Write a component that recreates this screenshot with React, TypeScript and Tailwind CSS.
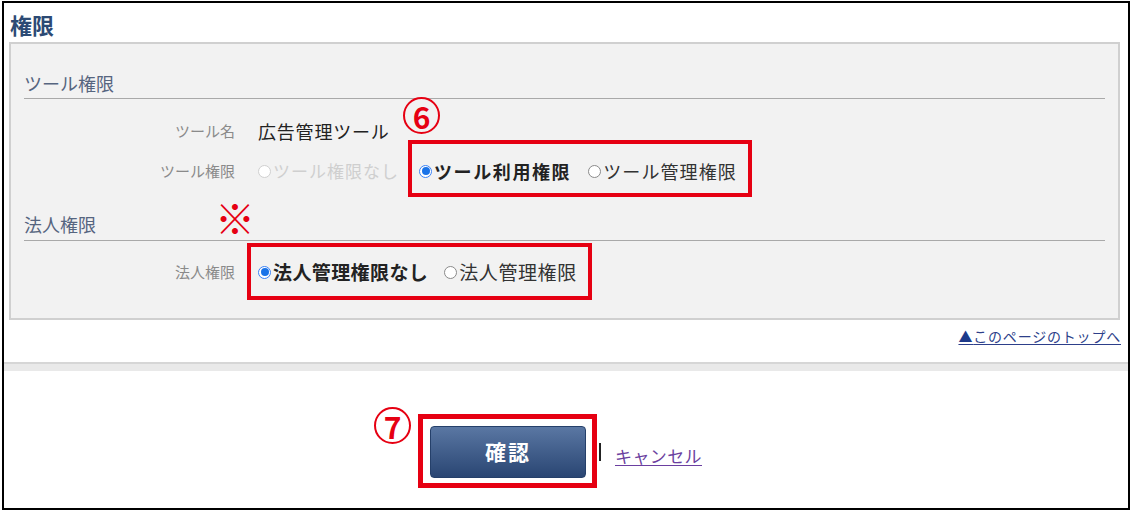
import React from "react";

const font = { fontFamily: '"Noto Sans CJK JP", "Noto Sans", sans-serif' };

function Radio({ checked, disabled }: { checked?: boolean; disabled?: boolean }) {
  if (checked) {
    return (
      <span className="mr-[2px] inline-flex h-[13px] w-[13px] shrink-0 items-center justify-center rounded-full border border-[#3b82f6] bg-white">
        <span className="h-[8px] w-[8px] rounded-full bg-[#1a73e8]" />
      </span>
    );
  }
  return (
    <span
      className={
        "mr-[2px] inline-block h-[13px] w-[13px] shrink-0 rounded-full border bg-white " +
        (disabled ? "border-[#d0d0d0]" : "border-[#8a8a8a]")
      }
    />
  );
}

function CircledNumber({ n, className }: { n: string; className: string }) {
  return (
    <span
      className={
        "absolute flex h-[37px] w-[37px] items-center justify-center rounded-full border-2 border-[#e60012] text-[30px] font-bold leading-none text-[#e60012] " +
        className
      }
    >
      {n}
    </span>
  );
}

function Row({ label, children }: { label: string; children: React.ReactNode }) {
  return (
    <div className="flex items-center leading-[24px]">
      <div className="w-[224px] shrink-0 text-right text-[15px] text-[#8a8a8a]">{label}</div>
      <div className="ml-[23px] flex items-center">{children}</div>
    </div>
  );
}

export default function App() {
  return (
    <div className="h-[513px] w-[1133px] bg-white" style={font}>
      <div className="ml-[2px] mt-[1px] flex h-[509px] w-[1128px] flex-col border-2 border-black">
        {/* title */}
        <div className="flex h-[39px] items-center pl-[6px] pt-[3px] text-[22px] font-bold text-[#2c4a74]">
          権限
        </div>

        {/* permissions panel */}
        <div className="ml-[5px] w-[1111px] border-2 border-[#d0d0d0] bg-[#f2f2f2] pb-[34px]">
          <div className="mx-[13px] border-b border-[#a9a9a9] pb-[3px] pt-[27px] text-[18px] leading-[24px] text-[#56657f]">
            ツール権限
          </div>

          <div className="mt-[20px] flex flex-col gap-[16px]">
            <Row label="ツール名">
              <span className="text-[18px] tracking-[0.8px] text-[#222]">広告管理ツール</span>
            </Row>
            <Row label="ツール権限">
              <span className="flex items-center text-[17px] tracking-[1px] text-[#cfcfcf]">
                <Radio disabled />
                ツール権限なし
              </span>
              <span className="relative ml-[20px] flex items-center">
                <span className="absolute -bottom-[14px] -left-[11px] -right-[15px] -top-[19px] border-4 border-[#e60012]" />
                <CircledNumber n="6" className="-left-[16px] -top-[62px]" />
                <span className="flex items-center text-[18px] font-bold tracking-[1.6px] text-[#222]">
                  <Radio checked />
                  ツール利用権限
                </span>
                <span className="ml-[17px] flex items-center text-[18px] tracking-[1.1px] text-[#333]">
                  <Radio />
                  ツール管理権限
                </span>
              </span>
            </Row>
          </div>

          <div className="mx-[13px] mt-[29px] border-b border-[#a9a9a9] pb-[4px] text-[18px] leading-[24px] text-[#56657f]">
            <span className="relative">
              法人権限
              <span className="absolute left-[191px] -top-[14px] text-[40px] leading-none text-[#e60012]">※</span>
            </span>
          </div>

          <div className="mt-[19px]">
            <Row label="法人権限">
              <span className="relative flex items-center">
                <span className="absolute -bottom-[16px] -left-[11px] -right-[15px] -top-[17px] border-4 border-[#e60012]" />
                <span className="flex items-center text-[19px] font-bold tracking-[0.4px] text-[#222]">
                  <Radio checked />
                  法人管理権限なし
                </span>
                <span className="ml-[16px] flex items-center text-[19px] tracking-[0.6px] text-[#333]">
                  <Radio />
                  法人管理権限
                </span>
              </span>
            </Row>
          </div>
        </div>

        {/* page top link */}
        <div className="mr-[7px] mt-[7px] flex justify-end text-[14px] leading-[18px] tracking-[0.8px]">
          <a className="text-[#2d3f8a] underline underline-offset-2">
            <span className="text-[#1d3a8a]">▲</span>このページのトップへ
          </a>
        </div>

        {/* separator band */}
        <div className="mt-[17px] h-[9px] border-t-2 border-[#d6d6d6] bg-[#e9e9e9]" />

        {/* actions */}
        <div className="mt-[55px] flex items-center justify-center">
          <div className="relative">
            <span className="absolute -bottom-[10px] -left-[12px] -right-[11px] -top-[12px] border-[5px] border-[#e60012]" />
            <CircledNumber n="7" className="-left-[56px] -top-[19px]" />
            <button className="relative flex h-[52px] w-[156px] items-center justify-center rounded-[4px] border border-[#25406a] bg-gradient-to-b from-[#5a77a3] to-[#2a4673] text-[21px] font-bold tracking-[2px] text-white">
              確認
            </button>
          </div>
          <span className="ml-[13px] h-[18px] w-[2px] bg-[#222]" />
          <a className="ml-[14px] mt-[8px] text-[17px] tracking-[0.4px] text-[#6b3fa0] underline underline-offset-2">
            キャンセル
          </a>
        </div>
      </div>
    </div>
  );
}
